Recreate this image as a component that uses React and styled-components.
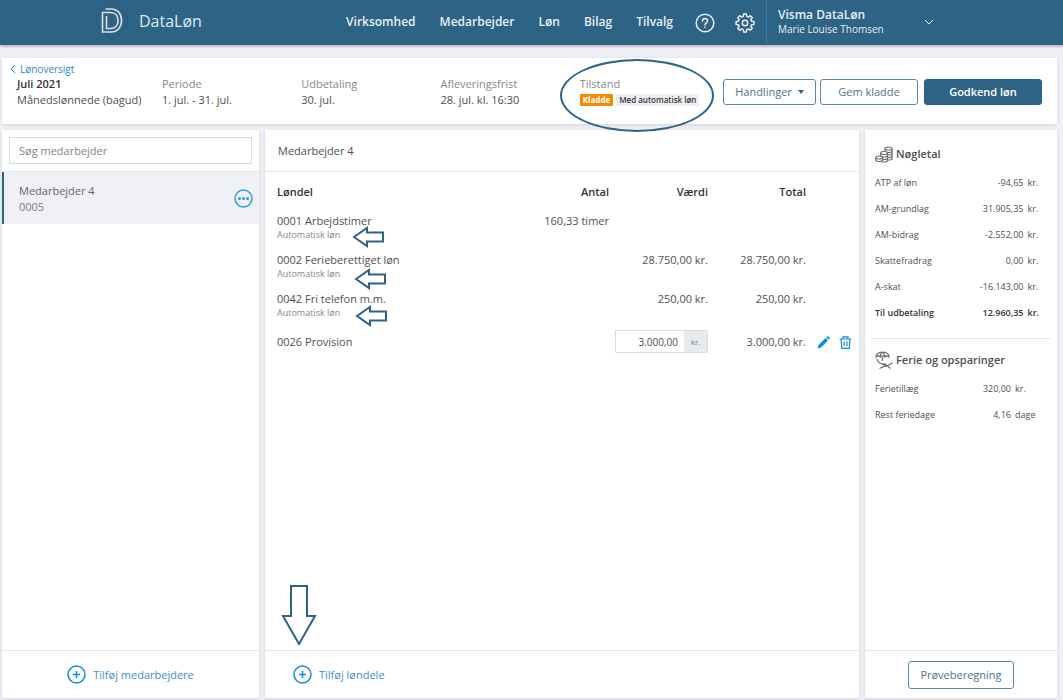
import React from 'react'
import styled, { createGlobalStyle } from 'styled-components'

const blue = '#2d6385'
const line = '#e6e8ec'

const GlobalStyle = createGlobalStyle`
  * {
    box-sizing: border-box;
  }
  body {
    margin: 0;
    background: #eff0f5;
    color: #4f4f4f;
    font-family: "Open Sans", "Noto Sans", sans-serif;
    font-size: 11px;
    line-height: 16px;
  }
  button, input {
    font: inherit;
    color: inherit;
  }
  button {
    cursor: pointer;
  }
`

const Page = styled.div`
  display: flex;
  flex-direction: column;
  min-height: 100vh;
`

/* top bar */
const TopBar = styled.header`
  display: flex;
  align-items: center;
  height: 45px;
  padding-left: 94px;
  background: ${blue};
  color: #e8eff4;
  box-shadow: 0 1px 3px rgba(0, 0, 0, 0.35);
`

const Brand = styled.a`
  display: flex;
  align-items: center;
  gap: 8px;
  padding-bottom: 3px;
  color: #dfe9ef;
  font-size: 16px;
  text-decoration: none;
`

const Nav = styled.nav`
  display: flex;
  align-items: center;
  gap: 24px;
  margin-left: auto;
  padding-right: 11px;
`

const NavLink = styled.a`
  padding-bottom: 2px;
  color: inherit;
  font-size: 12px;
  font-weight: 600;
  text-decoration: none;
`

const NavIcons = styled.div`
  display: flex;
  gap: 20px;
  margin-left: -2px;
`

const IconButton = styled.button`
  display: flex;
  padding: 0;
  border: 0;
  background: none;
  color: ${(props) => props.$color || 'inherit'};
`

const Account = styled.button`
  display: flex;
  align-items: center;
  gap: 40px;
  width: 297px;
  height: 45px;
  padding: 0 0 1px 11px;
  border: 0;
  border-left: 1px solid #44759a;
  background: none;
  text-align: left;
`

const AccountText = styled.span`
  display: flex;
  flex-direction: column;
  font-size: 10px;
  line-height: 14px;
  strong {
    font-size: 12px;
    font-weight: 600;
  }
`

/* summary card */
const Content = styled.main`
  display: flex;
  flex: 1;
  flex-direction: column;
  gap: 6px;
  padding: 13px 6px 2px 2px;
`

const Card = styled.section`
  background: #fff;
  box-shadow: 0 1px 3px rgba(60, 70, 90, 0.16);
`

const Summary = styled(Card)`
  padding: 4px 15px 16px 8px;
`

const BackLink = styled.a`
  display: flex;
  align-items: center;
  gap: 4px;
  width: max-content;
  color: #2f86c6;
  font-size: 10px;
  line-height: 14px;
  text-decoration: none;
`

const SummaryRow = styled.div`
  display: flex;
  align-items: center;
  padding-left: 7px;
`

const Facts = styled.dl`
  display: grid;
  flex: 1;
  grid-template-columns: 145px repeat(4, 1fr);
  margin: 0;
  white-space: nowrap;
`

const Fact = styled.div`
  position: relative;
  dt {
    color: ${(props) => (props.$strong ? '#333' : '#888')};
    font-weight: ${(props) => (props.$strong ? 600 : 400)};
  }
  dd {
    display: flex;
    align-items: center;
    gap: 3px;
    height: 16px;
    margin: 0;
  }
`

const Badge = styled.span`
  padding: 0 3px;
  border-radius: 1px;
  background: ${(props) => (props.$draft ? '#f38b00' : '#eff0f5')};
  color: ${(props) => (props.$draft ? '#fff' : '#333')};
  font-size: 8px;
  font-weight: ${(props) => (props.$draft ? 700 : 600)};
  line-height: 12px;
`

const Ring = styled.div`
  position: absolute;
  top: -17px;
  left: -20px;
  width: 154px;
  height: 73px;
  border: 2px solid ${blue};
  border-radius: 50%;
  pointer-events: none;
`

const Actions = styled.div`
  display: flex;
  gap: 4px;
  margin-left: 4px;
`

const Button = styled.button`
  display: flex;
  align-items: center;
  justify-content: center;
  gap: 6px;
  width: ${(props) => props.$width};
  height: ${(props) => props.$height || '26px'};
  padding: 0;
  border: 1px solid #5b87a4;
  border-radius: 3px;
  background: ${(props) => (props.$primary ? blue : '#fff')};
  color: ${(props) => (props.$primary ? '#fff' : '#4d7391')};
  font-weight: ${(props) => (props.$primary ? 600 : 400)};
  ${(props) => props.$primary && `margin-left: 2px; border-color: ${blue};`}
`

const Caret = styled.span`
  border: 3px solid transparent;
  border-top: 4px solid ${blue};
  border-bottom: 0;
`

/* the three columns */
const Columns = styled.div`
  display: grid;
  flex: 1;
  grid-template-columns: 257px 1fr 192px;
  gap: 6px;
`

const Panel = styled(Card)`
  display: flex;
  flex-direction: column;
`

const PanelHead = styled.div`
  display: flex;
  align-items: center;
  height: 42px;
  padding: ${(props) => props.$pad};
  border-bottom: 1px solid ${line};
`

const PanelBody = styled.div`
  flex: 1;
`

const PanelFoot = styled.div`
  position: relative;
  display: flex;
  align-items: center;
  justify-content: ${(props) => (props.$start ? 'flex-start' : 'center')};
  height: 48px;
  padding-left: ${(props) => (props.$start ? '28px' : '0')};
  border-top: 1px solid ${line};
`

const Search = styled.input`
  width: 100%;
  height: 27px;
  padding: 0 9px;
  border: 1px solid #d8dde2;
  border-radius: 0;
  &::placeholder {
    color: #858585;
    opacity: 1;
  }
`

const Employee = styled.div`
  display: flex;
  align-items: center;
  justify-content: space-between;
  height: 52px;
  padding: 0 6px 0 15px;
  border-left: 2px solid ${blue};
  background: #eff1f5;
`

const EmployeeName = styled.div`
  padding-top: 2px;
  color: #666;
  small {
    display: block;
    color: #808080;
    font-size: 11px;
  }
`

const AddButton = styled.button`
  display: flex;
  align-items: center;
  gap: 7px;
  padding: 0;
  border: 0;
  background: none;
  color: #3d8fce;
`

const Lines = styled.table`
  width: 100%;
  border-spacing: 0;
  table-layout: fixed;
  th {
    height: 39px;
    padding: 1px 0 0;
    color: #333;
    font-weight: 600;
    text-align: right;
  }
  td {
    height: 39px;
    padding: 2px 0 0;
    text-align: right;
    vertical-align: top;
  }
  th:first-child, td:first-child {
    position: relative;
    padding-left: 12px;
    text-align: left;
  }
`

const Source = styled.div`
  color: #888;
  font-size: 9px;
  line-height: 12px;
`

const ArrowLeft = styled.svg`
  position: absolute;
  top: ${(props) => props.$top}px;
  left: ${(props) => props.$left}px;
`

const ArrowDown = styled.svg`
  position: absolute;
  bottom: 51px;
  left: 16px;
`

const Centered = styled.div`
  display: flex;
  align-items: center;
  justify-content: ${(props) => props.$justify};
  gap: 9px;
  height: 24px;
  padding-left: ${(props) => props.$left || '0'};
`

const Amount = styled.label`
  display: flex;
  width: 93px;
  height: 23px;
  margin-left: auto;
  border: 1px solid #d8dde2;
  border-radius: 1px;
  input {
    flex: 1;
    min-width: 0;
    padding: 0 6px;
    border: 0;
    font-size: 10px;
    text-align: right;
  }
  span {
    width: 23px;
    background: #e7eaee;
    color: #777;
    font-size: 8px;
    line-height: 21px;
    text-align: center;
  }
`

const Figures = styled.section`
  margin: 0 6px;
  padding: ${(props) => (props.$divided ? '5px' : '8px')} 12px 12px 4px;
  border-top: ${(props) => (props.$divided ? `1px solid ${line}` : '0')};
  h2 {
    display: flex;
    align-items: center;
    gap: 3px;
    height: 32px;
    margin: 0;
    font-size: 11px;
    font-weight: 600;
    white-space: nowrap;
  }
`

const FigureTable = styled.table`
  width: 100%;
  border-spacing: 0;
  font-size: 9px;
  line-height: 12px;
  white-space: nowrap;
  th, td {
    height: 26px;
    padding: 0;
    font-weight: inherit;
    text-align: right;
  }
  th {
    text-align: left;
  }
  td:last-child {
    width: ${(props) => props.$unit};
    padding-left: 4px;
    text-align: left;
  }
  tr.total {
    color: #333;
    font-weight: 600;
  }
`

const Logo = () => (
  <svg width="37" height="42" viewBox="0 0 37 42" fill="none">
    <path d="M3 17 15 4q3-3 6 0l12 13q3 4 0 8L21 38q-3 3-6 0L3 25q-3-4 0-8Z" stroke="#275776" />
    <path
      d="M11.500 9H17c7 0 10.500 5 10.500 11.500S23.500 32 17 32H8.500V12.500H16.500c5 0 7.500 3.500 7.500 8s-2.500 8-7.500 8H12.500V16"
      stroke="#d5e1e9"
      strokeWidth="1.600"
    />
  </svg>
)

const HelpIcon = () => (
  <svg width="20" height="20" viewBox="0 0 20 20" fill="none" stroke="currentColor" strokeWidth="1.500" strokeLinecap="round">
    <circle cx="10" cy="10" r="8.800" />
    <path d="M7.500 8c0-3.300 5-3.300 5 0 0 2-2.500 1.800-2.500 4M10 14.300v.2" />
  </svg>
)

// eight teeth, four corners each
const gearPoints = Array.from({ length: 8 }, (_, i) =>
  [[-15, 6.8], [-9, 9], [9, 9], [15, 6.8]].map(([turn, r]) => {
    const angle = ((i * 45 + turn) * Math.PI) / 180
    return `${(10 + r * Math.cos(angle)).toFixed(2)},${(10 + r * Math.sin(angle)).toFixed(2)}`
  }).join(' ')
).join(' ')

const GearIcon = () => (
  <svg width="20" height="20" viewBox="0 0 20 20" fill="none" stroke="currentColor" strokeWidth="1.500" strokeLinejoin="round">
    <polygon points={gearPoints} />
    <circle cx="10" cy="10" r="2.700" />
  </svg>
)

const Chevron = ({ back }) => (
  <svg width={back ? 6 : 10} height={back ? 10 : 6} viewBox={back ? '0 0 6 10' : '0 0 10 6'} fill="none" stroke="currentColor">
    <path d={back ? 'M5 1 1 5l4 4' : 'm1 1 4 4 4-4'} />
  </svg>
)

const PlusIcon = () => (
  <svg width="19" height="19" viewBox="0 0 19 19" fill="none" stroke="#0f8ddb" strokeWidth="1.500">
    <circle cx="9.500" cy="9.500" r="8.500" />
    <path d="M9.500 6v7M6 9.500h7" />
  </svg>
)

const DotsIcon = () => (
  <svg width="19" height="19" viewBox="0 0 19 19" fill="#2a9fe6">
    <circle cx="9.500" cy="9.500" r="8.500" fill="none" stroke="#2a9fe6" strokeWidth="1.500" />
    <circle cx="5.500" cy="9.500" r="1.500" />
    <circle cx="9.500" cy="9.500" r="1.500" />
    <circle cx="13.500" cy="9.500" r="1.500" />
  </svg>
)

const PencilIcon = () => (
  <svg width="13" height="13" viewBox="0 0 13 13" fill="currentColor">
    <path d="M.5 12.500 1.500 9 8.500 2l2.500 2.500-7 7zM9.200 1.300l1-.9c.4-.3.8-.3 1.200 0l1.200 1.200c.3.400.3.800 0 1.200l-.9 1z" />
  </svg>
)

const TrashIcon = () => (
  <svg width="13" height="13" viewBox="0 0 13 13" fill="none" stroke="currentColor" strokeWidth="1.200">
    <path d="M.5 3h12M4 3V.8h5V3M2 3l.8 9.300h7.400L11 3M5 5.500v4.500M8 5.500v4.500" />
  </svg>
)

const Coins = ({ x, y, n }) => (
  <g>
    <path d={`M${x} ${y}v${n * 2.5}c0 2 7 2 7 0v-${n * 2.5}`} fill="#fff" />
    {Array.from({ length: n - 1 }, (_, i) => (
      <path key={i} d={`M${x} ${y + 2.5 * (i + 1)}c0 2 7 2 7 0`} />
    ))}
    <ellipse cx={x + 3.5} cy={y} rx="3.500" ry="1.500" fill="#fff" />
  </g>
)

const CoinsIcon = () => (
  <svg width="18" height="17" viewBox="0 0 18 17" fill="none" stroke="#707070" strokeWidth="1.200">
    <Coins x={10} y={2.5} n={4} />
    <Coins x={5.5} y={7} n={3} />
    <Coins x={0.7} y={11.5} n={1} />
  </svg>
)

const BeachIcon = () => (
  <svg width="18" height="18" viewBox="0 0 18 18" fill="none" stroke="#707070" strokeWidth="1.200">
    <path d="M1 6c0-6.500 13-6.500 13 0-1.500-1.300-3-1.300-4.300 0-1.300-1.300-3-1.300-4.400 0C4 4.700 2.500 4.700 1 6ZM5.300 6c0-2 .7-4 2.200-5 1.500 1 2.200 3 2.200 5M7.500 6v4M1.500 8l2.500 3.500 7.500 3.500 6-3M5.500 12.500 10 13l5.500 4.500M12 14l-7.500 3.500" />
  </svg>
)

const payLines = [
  { name: '0001 Arbejdstimer', count: '160,33 timer', arrow: [75, 15] },
  { name: '0002 Ferieberettiget løn', value: '28.750,00 kr.', total: '28.750,00 kr.', arrow: [77, 18] },
  { name: '0042 Fri telefon m.m.', value: '250,00 kr.', total: '250,00 kr.', arrow: [78, 16] },
]

const keyFigures = [
  ['ATP af løn', '-94,65', 'kr.'],
  ['AM-grundlag', '31.905,35', 'kr.'],
  ['AM-bidrag', '-2.552,00', 'kr.'],
  ['Skattefradrag', '0,00', 'kr.'],
  ['A-skat', '-16.143,00', 'kr.'],
  ['Til udbetaling', '12.960,35', 'kr.', 'total'],
]

const holidays = [
  ['Ferietillæg', '320,00', 'kr.'],
  ['Rest feriedage', '4,16', 'dage'],
]

const FigureRows = ({ rows, unit }) => (
  <FigureTable $unit={unit}>
    <tbody>
      {rows.map(([label, value, suffix, kind]) => (
        <tr key={label} className={kind}>
          <th scope="row">{label}</th>
          <td>{value}</td>
          <td>{suffix}</td>
        </tr>
      ))}
    </tbody>
  </FigureTable>
)

const App = () => {
  return (
    <Page>
      <GlobalStyle />
      <TopBar>
        <Brand href="#"><Logo /> DataLøn</Brand>
        <Nav>
          {['Virksomhed', 'Medarbejder', 'Løn', 'Bilag', 'Tilvalg'].map((item) => (
            <NavLink href="#" key={item}>{item}</NavLink>
          ))}
          <NavIcons>
            <IconButton aria-label="Hjælp"><HelpIcon /></IconButton>
            <IconButton aria-label="Indstillinger"><GearIcon /></IconButton>
          </NavIcons>
        </Nav>
        <Account>
          <AccountText>
            <strong>Visma DataLøn</strong>
            <span>Marie Louise Thomsen</span>
          </AccountText>
          <Chevron />
        </Account>
      </TopBar>

      <Content>
        <Summary>
          <BackLink href="#"><Chevron back /> Lønoversigt</BackLink>
          <SummaryRow>
            <Facts>
              <Fact $strong><dt>Juli 2021</dt><dd>Månedslønnede (bagud)</dd></Fact>
              <Fact><dt>Periode</dt><dd>1. jul. - 31. jul.</dd></Fact>
              <Fact><dt>Udbetaling</dt><dd>30. jul.</dd></Fact>
              <Fact><dt>Afleveringsfrist</dt><dd>28. jul. kl. 16:30</dd></Fact>
              <Fact>
                <dt>Tilstand</dt>
                <dd><Badge $draft>Kladde</Badge><Badge>Med automatisk løn</Badge></dd>
                <Ring />
              </Fact>
            </Facts>
            <Actions>
              <Button $width="93px">Handlinger <Caret /></Button>
              <Button $width="98px">Gem kladde</Button>
              <Button $width="118px" $primary>Godkend løn</Button>
            </Actions>
          </SummaryRow>
        </Summary>

        <Columns>
          <Panel>
            <PanelHead $pad="0 7px">
              <Search placeholder="Søg medarbejder" aria-label="Søg medarbejder" />
            </PanelHead>
            <PanelBody>
              <Employee>
                <EmployeeName>Medarbejder 4<small>0005</small></EmployeeName>
                <IconButton aria-label="Flere valg"><DotsIcon /></IconButton>
              </Employee>
            </PanelBody>
            <PanelFoot>
              <AddButton><PlusIcon /> Tilføj medarbejdere</AddButton>
            </PanelFoot>
          </Panel>

          <Panel>
            <PanelHead $pad="0 13px">Medarbejder 4</PanelHead>
            <PanelBody>
              <Lines>
                <colgroup>
                  <col />
                  <col style={{ width: 110 }} />
                  <col style={{ width: 99 }} />
                  <col style={{ width: 98 }} />
                  <col style={{ width: 53 }} />
                </colgroup>
                <thead>
                  <tr><th>Løndel</th><th>Antal</th><th>Værdi</th><th>Total</th><th /></tr>
                </thead>
                <tbody>
                  {payLines.map((row) => (
                    <tr key={row.name}>
                      <td>
                        {row.name}
                        <Source>Automatisk løn</Source>
                        <ArrowLeft $left={row.arrow[0] + 12} $top={row.arrow[1]} width="33" height="22" viewBox="0 0 33 22">
                          <path d="M2 11 15 2v4.500h16v9H15V20Z" fill="#fff" stroke={blue} strokeWidth="2" />
                        </ArrowLeft>
                      </td>
                      <td>{row.count}</td>
                      <td>{row.value}</td>
                      <td>{row.total}</td>
                      <td />
                    </tr>
                  ))}
                  <tr>
                    <td><Centered>0026 Provision</Centered></td>
                    <td />
                    <td>
                      <Amount>
                        <input defaultValue="3.000,00" aria-label="Værdi for 0026 Provision" />
                        <span>kr.</span>
                      </Amount>
                    </td>
                    <td><Centered $justify="flex-end">3.000,00 kr.</Centered></td>
                    <td>
                      <Centered $left="11px">
                        <IconButton $color="#0f8ddb" aria-label="Rediger"><PencilIcon /></IconButton>
                        <IconButton $color="#0f8ddb" aria-label="Slet"><TrashIcon /></IconButton>
                      </Centered>
                    </td>
                  </tr>
                </tbody>
              </Lines>
            </PanelBody>
            <PanelFoot $start>
              <AddButton><PlusIcon /> Tilføj løndele</AddButton>
              <ArrowDown width="36" height="63" viewBox="0 0 36 63">
                <path d="M10 2h16v30h8L18 60 2 32h8Z" fill="#fff" stroke={blue} strokeWidth="2" />
              </ArrowDown>
            </PanelFoot>
          </Panel>

          <Panel>
            <PanelBody>
              <Figures>
                <h2><CoinsIcon /> Nøgletal</h2>
                <FigureRows rows={keyFigures} unit="14px" />
              </Figures>
              <Figures $divided>
                <h2><BeachIcon /> Ferie og opsparinger</h2>
                <FigureRows rows={holidays} unit="28px" />
              </Figures>
            </PanelBody>
            <PanelFoot>
              <Button $width="106px" $height="28px">Prøveberegning</Button>
            </PanelFoot>
          </Panel>
        </Columns>
      </Content>
    </Page>
  )
}

export default App
